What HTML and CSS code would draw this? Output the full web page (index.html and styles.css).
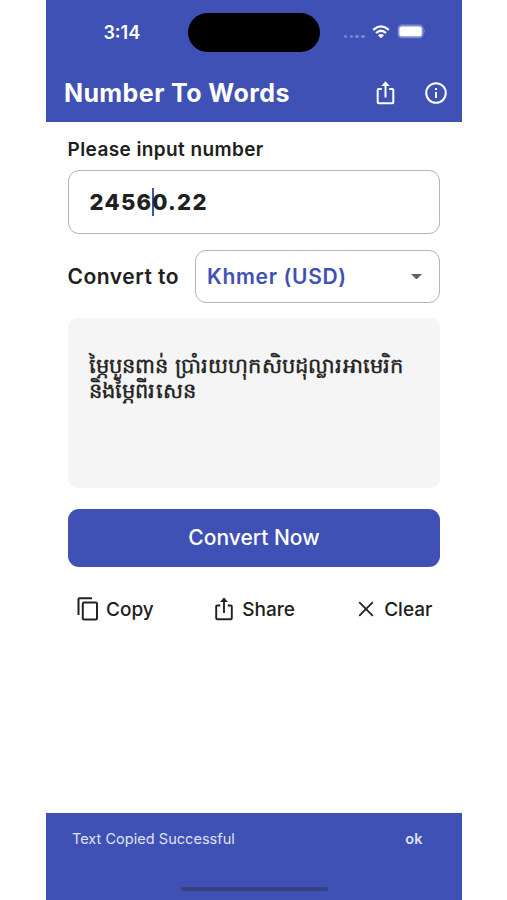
FILE: index.html
```html
<!DOCTYPE html>
<html lang="en">
<head>
<meta charset="utf-8">
<title>Number To Words</title>
<link rel="stylesheet" href="styles.css">
</head>
<body>
<div class="phone">
  <header class="header">
    <div class="status">
      <span class="time">3:14</span>
      <span class="island"></span>
      <span class="signal"><i></i><i></i><i></i><i></i></span>
      <svg class="wifi" viewBox="0 0 18 14"><path d="M1.2 4.8Q9-2 16.8 4.8M4 8Q9 3.4 14 8" fill="none" stroke="#fff" stroke-width="2.3"/><path d="M6 10.2Q9 7.6 12 10.2L9 13.3Z" fill="#fff"/></svg>
      <svg class="battery" viewBox="0 0 30 15"><rect x=".6" y=".6" width="26" height="13.6" rx="4.3" fill="#7f8bd0"/><rect x="2.4" y="2.5" width="22.4" height="9.8" rx="2.6" fill="#fff"/><path d="M27.5 5.2q1.6 2.2 0 4.4z" fill="#a4add9"/></svg>
    </div>
    <div class="appbar">
      <h1 class="title">Number To Words</h1>
      <svg class="bar-share" viewBox="0 0 18 24"><path d="M5.3 8H2.2q-1 0-1 1v12.2q0 1 1 1h13.6q1 0 1-1V9q0-1-1-1h-3.1M9 16.5V3" fill="none" stroke="#fff" stroke-width="2"/><path d="M9 .3 13.2 5H4.8z" fill="#fff"/></svg>
      <svg class="bar-info" viewBox="0 0 22 22"><circle cx="11" cy="11" r="9.8" fill="none" stroke="#fff" stroke-width="2"/><path d="M10 10h2v6h-2zM10 6h2v2h-2z" fill="#fff"/></svg>
    </div>
  </header>
  <main class="content">
    <div class="label"><span>Please input number</span></div>
    <div class="input"><span>2456</span><i class="caret"></i><span>0.22</span></div>
    <div class="convert">
      <span class="convert-label">Convert to</span>
      <div class="select"><span>Khmer (USD)</span><svg class="arrow" viewBox="0 0 10 5"><path d="M0 0h10L5 5z" fill="#616161"/></svg></div>
    </div>
    <div class="result" lang="km">ម្ភៃបួនពាន់ ប្រាំរយហុកសិបដុល្លារអាមេរិក<br>និងម្ភៃពីរសេន</div>
    <div class="button"><span>Convert Now</span></div>
    <div class="actions">
      <div class="action"><svg class="copy-icon" viewBox="0 0 22 24"><path d="M1.5 18V2.2q0-1 1-1H15" fill="none" stroke="#222" stroke-width="2"/><rect x="5.8" y="5.5" width="14.2" height="17" rx="1.2" fill="none" stroke="#222" stroke-width="2"/></svg><span>Copy</span></div>
      <div class="action"><svg class="share-icon" viewBox="0 0 18 24"><path d="M5.3 8.5H2.2q-1 0-1 1v11.7q0 1 1 1h13.6q1 0 1-1V9.5q0-1-1-1h-3.1M9 16V3" fill="none" stroke="#222" stroke-width="1.9"/><path d="M9 .5 13 5H5z" fill="#222"/></svg><span>Share</span></div>
      <div class="action"><svg class="clear-icon" viewBox="0 0 16 16"><path d="m1.2 1.2 13.6 13.6m0-13.6L1.2 14.8" fill="none" stroke="#222" stroke-width="1.8"/></svg><span>Clear</span></div>
    </div>
  </main>
  <footer class="snackbar">
    <div class="snack-row"><span class="message">Text Copied Successful</span><span class="ok">ok</span></div>
    <div class="home"></div>
  </footer>
</div>
</body>
</html>
```

FILE: styles.css
```css
* { box-sizing: border-box; }
body { margin: 0; background: #fff; color: #202020; font-family: Inter, sans-serif; }
svg { display: block; flex: none; }
span { white-space: nowrap; }
.phone { width: 415.5px; height: 900px; margin-left: 46.4px; display: flex; flex-direction: column; }
.header { height: 122px; flex: none; background: #3f51b5; color: #fff; }
.status { height: 64px; padding-left: 57px; display: flex; align-items: center; }
.time { width: 84.5px; font-size: 18px; font-weight: 600; }
.island { width: 132px; height: 39px; border-radius: 20px; background: #000; }
.signal { display: flex; gap: 2.2px; margin: 9px 0 0 24px; }
.signal i { width: 3.6px; height: 3.6px; border-radius: 50%; background: #7985ce; }
.wifi { width: 18px; height: 14px; margin: -1px 0 0 7.5px; }
.battery { width: 30px; height: 15px; margin: -1px 0 0 7px; }
.appbar { height: 58px; padding: 0 14.5px 0 17.5px; display: flex; align-items: center; }
.title { flex: 1; margin: 0; font-size: 25px; line-height: 58px; font-weight: 700; letter-spacing: .43px; white-space: nowrap; }
.bar-share { width: 19px; height: 24px; margin-right: 30px; }
.bar-info { width: 22px; height: 22px; }
.content { height: 691px; padding: 15px 21.5px 0 21.2px; }
.label { height: 26px; line-height: 25px; font-size: 19px; font-weight: 600; letter-spacing: .4px; }
.input { height: 64px; margin-top: 7px; padding-left: 21px; border: 1.5px solid #b5b5b5; border-radius: 11px; display: flex; align-items: center; font-size: 22px; font-weight: 800; letter-spacing: 1.25px; }
.caret { width: 2px; height: 28px; margin: 0 -1.5px 0 -.5px; background: #3f51b5; }
.convert { display: flex; align-items: center; margin-top: 16px; height: 53px; }
.convert-label { width: 127.5px; font-size: 21px; font-weight: 600; letter-spacing: .5px; }
.select { flex: 1; height: 53px; padding: 0 17.5px 0 11px; border: 1.5px solid #b5b5b5; border-radius: 11px; display: flex; align-items: center; justify-content: space-between; font-size: 21px; font-weight: 600; letter-spacing: .65px; color: #3f51b5; }
.arrow { width: 11px; height: 5.5px; }
.result { height: 170px; margin-top: 15px; padding: 35px 21px; border-radius: 9px; background: #f5f5f5; font-size: 21px; line-height: 25px; letter-spacing: .2px; -webkit-text-stroke: .4px #202020; white-space: nowrap; }
.button { height: 58px; margin-top: 20.5px; border-radius: 11px; background: #3f51b5; color: #fff; font-size: 21px; font-weight: 500; display: flex; align-items: center; justify-content: center; }
.actions { height: 86px; padding: 0 8px 1px 9px; display: flex; align-items: center; justify-content: space-between; font-size: 19px; font-weight: 500; }
.action { display: flex; align-items: center; }
.action:nth-child(2) { margin-right: 2px; }
.copy-icon { width: 22px; height: 24px; margin-right: 7.5px; }
.share-icon { width: 18px; height: 24px; margin-right: 9px; }
.clear-icon { width: 16px; height: 16px; margin-right: 10px; }
.snackbar { height: 87px; flex: none; padding-top: 12px; background: #3f51b5; color: #dfe3f8; }
.snack-row { height: 26px; padding: 0 39.5px 0 25.5px; display: flex; align-items: center; justify-content: space-between; font-size: 14.5px; }
.message { letter-spacing: .04px; }
.ok { font-weight: 600; }
.home { width: 147px; height: 4px; margin: 36px auto 0; border-radius: 2px; background: #39407c; }
```
